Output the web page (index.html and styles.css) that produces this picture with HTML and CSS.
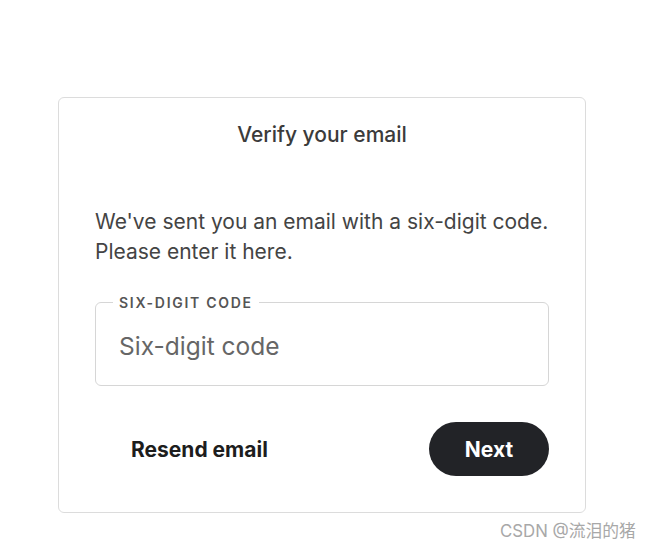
FILE: index.html
```html
<!DOCTYPE html>
<html lang="en">
<head>
  <meta charset="UTF-8">
  <meta name="viewport" content="width=device-width, initial-scale=1.0">
  <title>Verify your email</title>
  <link rel="stylesheet" href="styles.css">
</head>
<body>
  <div class="card">
    <h1 class="title">Verify your email</h1>
    <p class="intro">We've sent you an email with a six-digit code. Please enter it here.</p>

    <fieldset class="code-field">
      <legend>SIX-DIGIT CODE</legend>
      <input type="text" name="code" placeholder="Six-digit code">
    </fieldset>

    <div class="actions">
      <button type="button" class="link-btn">Resend email</button>
      <button type="button" class="next-btn">Next</button>
    </div>
  </div>

  <div class="watermark">CSDN @流泪的猪</div>
</body>
</html>
```

FILE: styles.css
```css
body {
  font-family: Inter, "Noto Sans CJK SC", sans-serif;
  background-color: #fff;
  color: #3c3c3c;
  margin: 0;
  padding: 97px 0 0 58px;
}
.card {
  box-sizing: border-box;
  width: 528px;
  height: 416px;
  border: 1px solid #dcdcdc;
  border-radius: 6px;
  padding: 23px 36px 0 36px;
}
.title {
  margin: 0;
  text-align: center;
  font-size: 21px;
  font-weight: 500;
  line-height: 28px;
  color: #3b3b3b;
}
.intro {
  margin: 58px 0 0 0;
  font-size: 21px;
  line-height: 30px;
  color: #444;
}
.code-field {
  margin: 27px 0 0 0;
  padding: 0 23px;
  height: 92px;
  box-sizing: border-box;
  border: 1px solid #d6d6d6;
  border-radius: 6px;
}
.code-field legend {
  margin-left: -6px;
  padding: 0 6px;
  font-size: 14px;
  font-weight: 600;
  letter-spacing: 1.7px;
  color: #555;
}
.code-field input {
  display: block;
  width: 100%;
  border: none;
  outline: none;
  padding: 0;
  margin-top: 19px;
  font-family: inherit;
  font-size: 24.5px;
  line-height: 32px;
  color: #333;
}
.code-field input::placeholder {
  color: #666;
}
.actions {
  display: flex;
  justify-content: space-between;
  align-items: center;
  margin-top: 36px;
}
button {
  font-family: inherit;
  font-size: 21px;
  font-weight: 700;
  border: none;
  cursor: pointer;
}
.link-btn {
  background: none;
  color: #1d1d1d;
  padding: 0 36px;
}
.next-btn {
  width: 120px;
  height: 54px;
  border-radius: 27px;
  background-color: #222327;
  color: #fff;
}
.watermark {
  position: absolute;
  left: 500px;
  top: 518px;
  font-size: 16.8px;
  color: #a8a8a8;
}
```
